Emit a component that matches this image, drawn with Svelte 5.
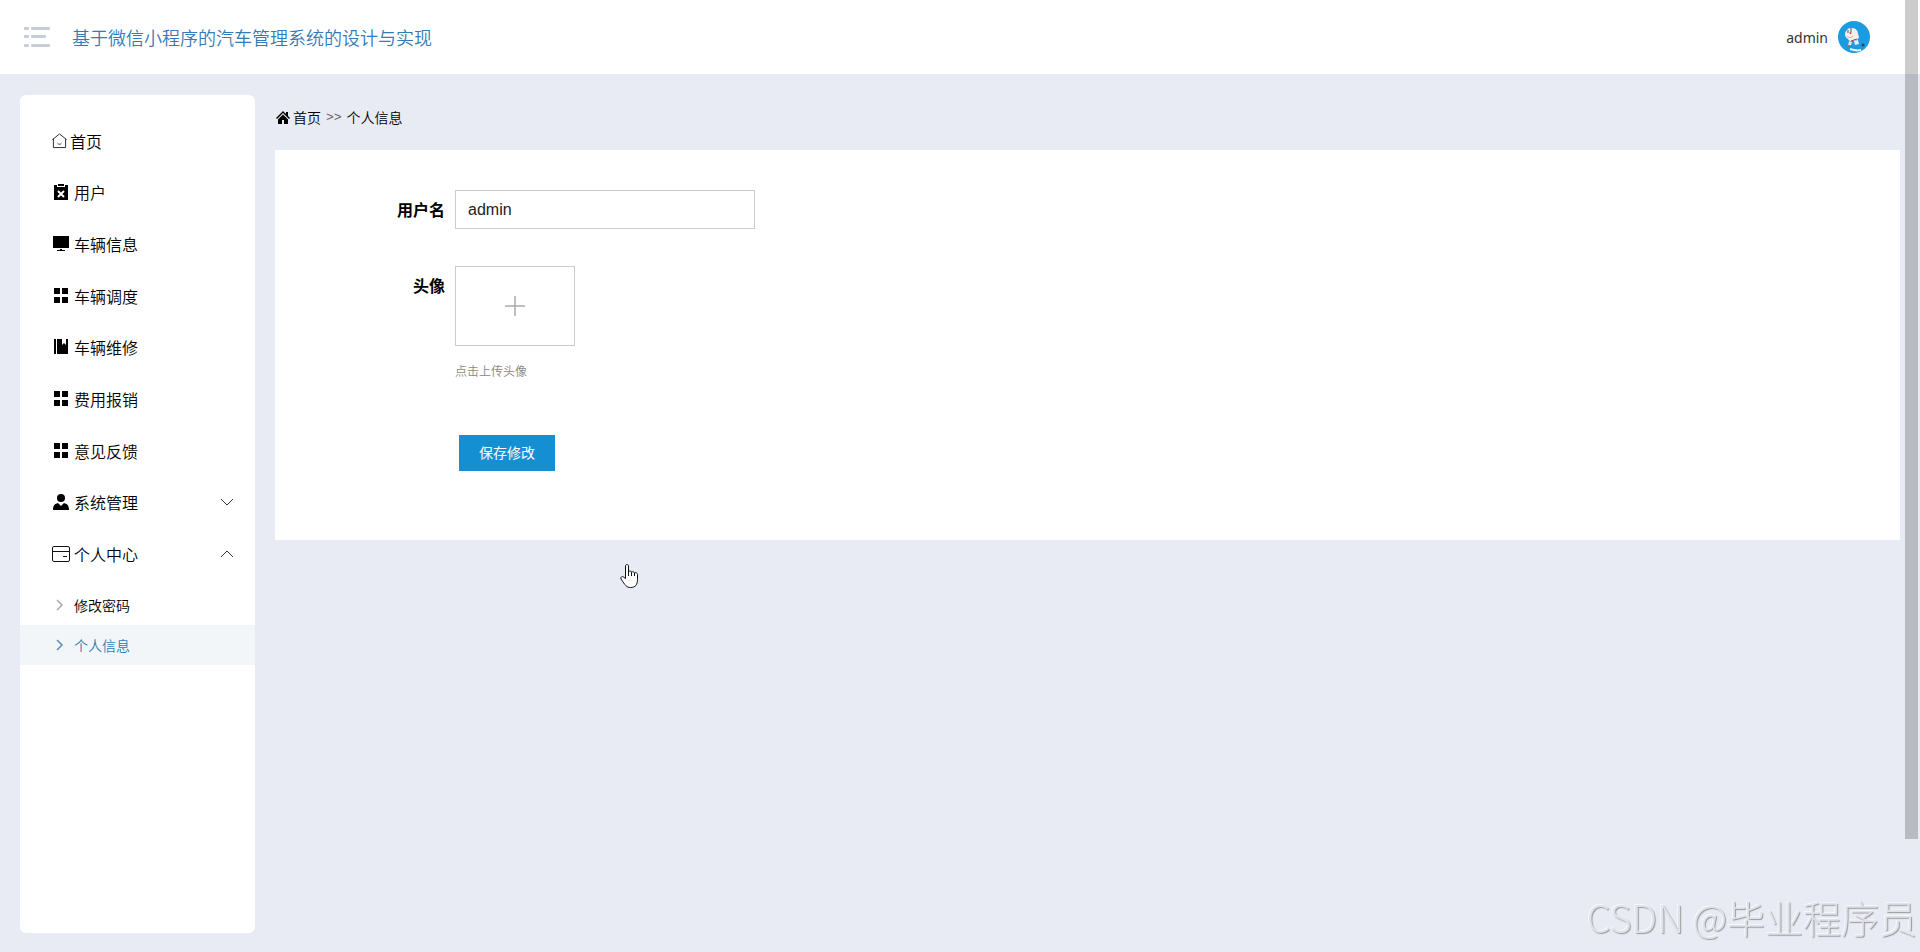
<script>
    let username = "admin";

    const menu = [
        { title: "首页", icon: "house" },
        { title: "用户", icon: "clipboard" },
        { title: "车辆信息", icon: "monitor" },
        { title: "车辆调度", icon: "grid" },
        { title: "车辆维修", icon: "book" },
        { title: "费用报销", icon: "grid" },
        { title: "意见反馈", icon: "grid" },
        { title: "系统管理", icon: "person", arrow: "down" },
        { title: "个人中心", icon: "card", arrow: "up" },
    ];

    const submenu = ["修改密码", "个人信息"];
    let current = "个人信息";
</script>

<div class="page">
    <header>
        <button class="toggle" aria-label="菜单">
            <svg width="28" height="22" viewBox="0 0 28 22" fill="#c8ced8">
                <rect x="1" y="1" width="5" height="3" rx="1" />
                <rect x="8" y="1" width="19" height="3" rx="1" />
                <rect x="1" y="9" width="5" height="3" rx="1" />
                <rect x="8" y="9" width="15" height="3" rx="1" />
                <rect x="1" y="18" width="5" height="3" rx="1" />
                <rect x="8" y="18" width="19" height="3" rx="1" />
            </svg>
        </button>
        <h1>基于微信小程序的汽车管理系统的设计与实现</h1>
        <div class="user">
            <span>admin</span>
            <svg width="32" height="32" viewBox="0 0 32 32">
                <circle cx="16" cy="16" r="16" fill="#1b9be0" />
                <path d="M7 13c0-2 1-3 2-4 1-2 3-2 5-2 4 0 6 3 6 6l1 3c-1 3-4 4-7 4-2 0-3 0-4-2-2-1-3-3-3-5z" fill="#f3efee" />
                <path d="M10 9v3M13 7v4" stroke="#555" stroke-width="1" />
                <circle cx="12.500" cy="12" r="1" fill="#d8323a" />
                <path d="M9 15c2 2 4 2 6 0" stroke="#d9a4a6" stroke-width="1" fill="none" />
                <path d="M13 20l6-2" stroke="#c8303b" stroke-width="1" />
                <path d="M11 20l3 1-1 3-3 1z" fill="#e8edf2" />
                <path d="M16 20l4-1 1 4-4 1z" fill="#e8edf2" />
                <circle cx="11" cy="25" r="1" fill="#a8526b" />
                <circle cx="25" cy="24" r="1.500" fill="#4d3768" />
                <path d="M12 28c3 1 7 2 11 1" stroke="#eef5fa" stroke-width="2" fill="none" />
            </svg>
        </div>
    </header>

    <div class="body">
        <nav class="sidebar">
            <ul class="menu">
                {#each menu as item}
                    <li>
                        <a href="#top">
                            <span class="icon" class:narrow={item.icon === "house"}>
                                {#if item.icon === "house"}
                                    <svg width="16" height="16" viewBox="0 0 16 16" fill="none" stroke="#222">
                                        <path d="M1.500 5.500v9.500h13v-9.500M.5 6.500l7.500-6 7.500 6M6 10.500c1 1.300 3 1.300 4 0" />
                                    </svg>
                                {:else if item.icon === "clipboard"}
                                    <svg width="16" height="16" viewBox="0 0 16 16">
                                        <path d="M1 1h3v2h8v-2h3v15h-14z" fill="#000" />
                                        <path d="M5 0h6v2h-6z" fill="#000" />
                                        <path d="M5 7l6 6M11 7l-6 6" stroke="#fff" stroke-width="2" />
                                    </svg>
                                {:else if item.icon === "monitor"}
                                    <svg width="16" height="16" viewBox="0 0 16 16" fill="#000">
                                        <path d="M0 0h16v12h-16zM7 13h2v1h3v1h-8v-1h3z" />
                                    </svg>
                                {:else if item.icon === "grid"}
                                    <svg width="16" height="16" viewBox="0 0 16 16" fill="#000">
                                        <path d="M1 0h6v6h-6zM9 0h6v6h-6zM1 9h6v6h-6zM9 9h6v6h-6z" />
                                    </svg>
                                {:else if item.icon === "book"}
                                    <svg width="16" height="16" viewBox="0 0 16 16" fill="#000">
                                        <path d="M1 0h2v15h-2zM4 0h5v6l2-2 2 2v-6h2v15h-11z" />
                                    </svg>
                                {:else if item.icon === "person"}
                                    <svg width="16" height="16" viewBox="0 0 16 16" fill="#000">
                                        <circle cx="8" cy="4" r="4" />
                                        <path d="M0 16c0-5 2-6 5-7l3 3 3-3c3 1 5 2 5 7z" />
                                    </svg>
                                {:else}
                                    <svg width="18" height="16" viewBox="0 0 18 16" fill="none" stroke="#111">
                                        <rect x="0.500" y="0.500" width="17" height="15" rx="1.500" />
                                        <path d="M1 5.500h16M11 10.500h4" />
                                    </svg>
                                {/if}
                            </span>
                            {item.title}
                            {#if item.arrow}
                                <svg class="arrow" width="14" height="8" viewBox="0 0 14 8" fill="none" stroke="#333">
                                    <path d={item.arrow === "down" ? "M1 1l6 6 6-6" : "M1 7l6-6 6 6"} />
                                </svg>
                            {/if}
                        </a>
                    </li>
                {/each}
            </ul>
            <ul class="submenu">
                {#each submenu as title}
                    <li>
                        <a href="#top" class:active={title === current}>
                            <svg width="8" height="12" viewBox="0 0 8 12" fill="none" stroke="currentColor" stroke-width="1.500">
                                <path d="M1 1l5 5-5 5" />
                            </svg>
                            <span>{title}</span>
                        </a>
                    </li>
                {/each}
            </ul>
        </nav>

        <main>
            <div class="breadcrumb">
                <svg width="14" height="13" viewBox="0 0 14 13" fill="#000">
                    <path d="M7 0l3 3v-2h2v4l2 2-1 1-6-6-6 6-1-1zM7 3.500l5 5v4.500h-4v-4h-2v4h-4v-4.500z" />
                </svg>
                <a href="#top">首页</a>
                <span class="sep">&gt;&gt;</span>
                <span>{current}</span>
            </div>

            <form class="panel" on:submit|preventDefault>
                <div class="row">
                    <label for="username">用户名</label>
                    <input id="username" type="text" bind:value={username}>
                </div>
                <div class="row">
                    <label for="upload">头像</label>
                    <div>
                        <button id="upload" class="upload" type="button" aria-label="点击上传头像">
                            <svg width="20" height="20" viewBox="0 0 20 20" stroke="#aaa" stroke-width="1.500">
                                <path d="M10 0v20M0 10h20" />
                            </svg>
                        </button>
                        <p class="tip">点击上传头像</p>
                    </div>
                </div>
                <button class="save" type="submit">保存修改</button>
            </form>
        </main>
    </div>

    <div class="scrollbar"></div>
    <svg class="cursor" width="18" height="24" viewBox="0 0 18 24" fill="#fff" stroke="#111">
        <path d="M5.500 14.500v-12.500c0-2 3-2 3 0v5.500c1-.8 2.500-.5 3 .5 1-.5 2.500-.2 3 .8 1.500-.5 3 .2 3 1.700v5c0 5-2 8-7 8-4 0-5-2-9.500-8.500-1-2 1.500-3 2.500-2z" />
        <path d="M8.500 7v5M11.500 8v4M14.500 9v3" />
    </svg>
    <div class="watermark">CSDN @毕业程序员</div>
</div>

<style>
    :global(body) {
        background: #e8eaf4;
    }

    .page {
        min-height: 100vh;
        display: flex;
        flex-direction: column;
        font-family: "Noto Sans CJK SC", sans-serif;
        font-size: 16px;
        color: #000;
    }

    header {
        display: flex;
        align-items: center;
        height: 74px;
        padding: 0 50px 0 23px;
        background: #fff;
    }

    .toggle {
        display: flex;
        padding: 0;
        border: none;
        background: none;
        cursor: pointer;
    }

    h1 {
        margin: 0 0 0 21px;
        font-size: 18px;
        font-weight: 350;
        color: #337ab7;
    }

    .user {
        display: flex;
        align-items: center;
        gap: 10px;
        margin-left: auto;
        font-family: "Noto Sans", sans-serif;
        font-size: 14px;
        color: #333;
    }

    .body {
        display: flex;
        flex: 1;
        gap: 20px;
        padding: 21px 20px 19px;
    }

    .sidebar {
        width: 235px;
        flex-shrink: 0;
        padding-top: 20px;
        box-sizing: border-box;
        border-radius: 6px;
        background: #fff;
    }

    ul {
        margin: 0;
        padding: 0;
        list-style: none;
    }

    a {
        color: inherit;
        text-decoration: none;
    }

    .menu {
        display: grid;
        grid-auto-rows: 1fr;
        height: 465px;
    }

    .menu a {
        display: flex;
        align-items: center;
        height: 100%;
        padding: 0 21px 0 32px;
        font-weight: 350;
    }

    .icon {
        display: flex;
        justify-content: center;
        width: 18px;
        margin-right: 4px;
    }

    .icon.narrow {
        width: 15px;
        margin-right: 3px;
    }

    .arrow {
        margin-left: auto;
    }

    .submenu {
        margin-top: 5px;
    }

    .submenu a {
        display: flex;
        align-items: center;
        gap: 10px;
        height: 40px;
        padding-left: 36px;
        font-size: 14px;
        font-weight: 350;
    }

    .submenu svg {
        color: #aaa;
    }

    .submenu .active {
        background: #f2f6f9;
        color: #337ab7;
    }

    .submenu .active svg {
        color: #5e8cb5;
    }

    main {
        flex: 1;
    }

    .breadcrumb {
        display: flex;
        align-items: center;
        height: 55px;
        padding: 0 1px 11px;
        box-sizing: border-box;
        font-size: 14px;
        font-weight: 350;
    }

    .breadcrumb a {
        margin: 0 5px 0 3px;
    }

    .sep {
        margin-right: 5px;
        font-family: "Liberation Mono", monospace;
        font-size: 13px;
        color: #666;
    }

    .panel {
        padding: 40px 20px 69px 120px;
        background: #fff;
    }

    .row {
        display: flex;
        align-items: flex-start;
        margin-bottom: 37px;
    }

    .row label {
        width: 50px;
        margin-right: 10px;
        line-height: 39px;
        font-weight: 700;
        text-align: right;
    }

    .row input {
        width: 300px;
        height: 39px;
        padding: 0 12px;
        box-sizing: border-box;
        border: 1px solid #ccc;
        font-family: "Liberation Sans", Arial, sans-serif;
        font-size: 16px;
        color: #222;
    }

    .row input:focus {
        outline: none;
        border-color: #1490d2;
    }

    .upload {
        display: flex;
        align-items: center;
        justify-content: center;
        width: 120px;
        height: 80px;
        padding: 0;
        border: 1px solid #ccc;
        background: #fff;
        cursor: pointer;
    }

    .tip {
        margin: 15px 0 0;
        font-size: 12px;
        line-height: 20px;
        font-weight: 350;
        color: #888;
    }

    .save {
        display: block;
        width: 96px;
        height: 36px;
        margin: 54px 0 0 64px;
        padding: 0 0 2px;
        border: none;
        background: #1490d2;
        color: #fff;
        font-family: inherit;
        font-size: 14px;
        cursor: pointer;
    }

    .scrollbar {
        position: fixed;
        top: 0;
        right: 2px;
        width: 13px;
        height: 839px;
        max-height: 100vh;
        background: rgba(0, 0, 0, 0.2);
    }

    .cursor {
        position: absolute;
        top: 564px;
        left: 620px;
    }

    .watermark {
        position: fixed;
        right: 3px;
        bottom: 11px;
        font-size: 38px;
        line-height: 48px;
        font-weight: 300;
        color: #e0e2ea;
        text-shadow: 1px 1px 1px #999, -1px -1px 0 #f6f7fb;
    }
</style>
